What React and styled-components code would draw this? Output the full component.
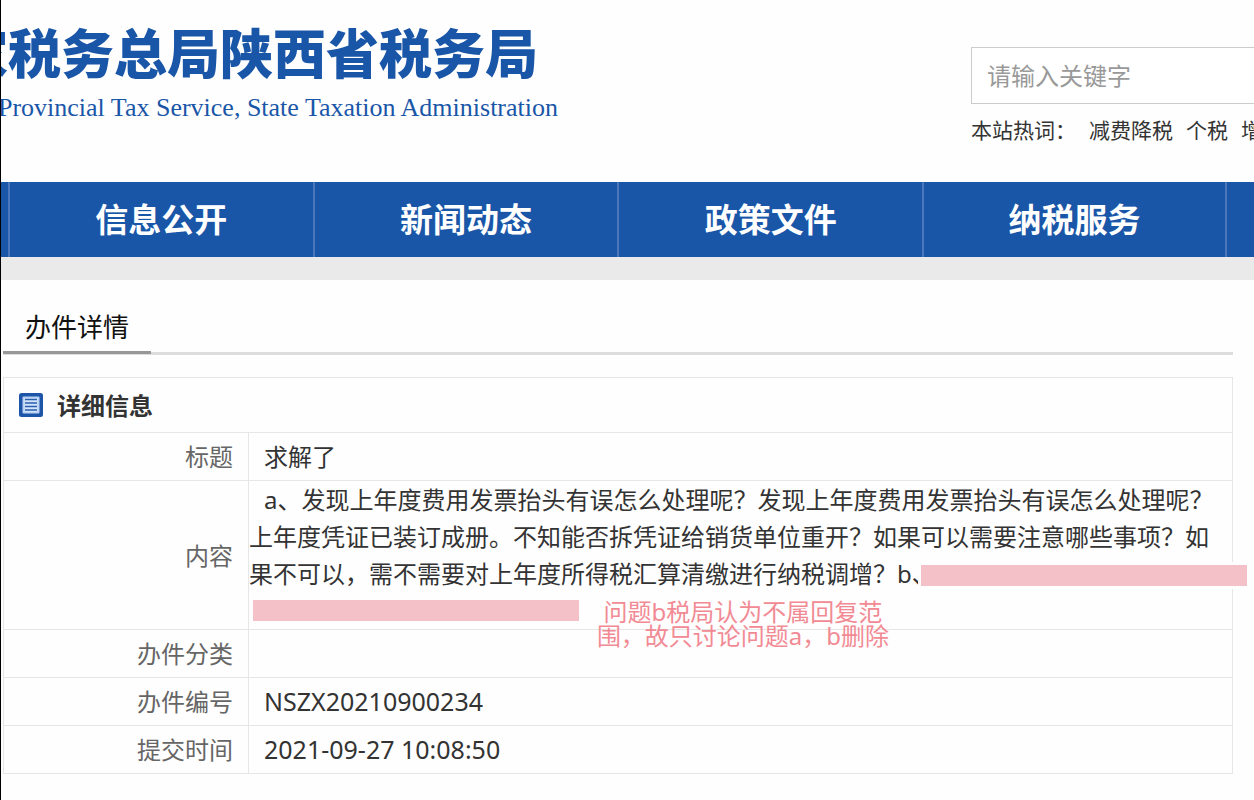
import React, {useState} from 'react';
import styled, {createGlobalStyle} from 'styled-components';

const GlobalStyle = createGlobalStyle`
  * {
    box-sizing: border-box;
  }

  body {
    margin: 0;
    background: #fefefe;
    color: #333;
    font-family: "Noto Sans", "Noto Sans CJK SC", sans-serif;
    font-size: 24px;
    overflow-x: hidden;
  }

  a {
    color: inherit;
    text-decoration: none;
  }
`;

const NAV = ['信息公开', '新闻动态', '政策文件', '纳税服务'];
const HOT_WORDS = ['减费降税', '个税', '增值税'];

const Page = styled.div`
  min-height: 100vh;
  border-left: 1px solid #000;
  overflow: hidden;
`;

const Header = styled.header`
  display: flex;
  justify-content: space-between;
  height: 182px;
`;

const Brand = styled.div`
  display: flex;
  flex-direction: column;
  align-items: flex-end;
  width: 557px;
  padding-top: 21px;
  overflow: hidden;
  color: #1a56a8;
  white-space: nowrap;
`;

const BrandName = styled.h1`
  margin: 0;
  padding-right: 20px;
  font-family: "Noto Sans CJK SC", sans-serif;
  font-size: 53px;
  font-weight: 900;
  line-height: 60px;
`;

const BrandSub = styled.p`
  margin: 12px 0 0;
  font-family: "Liberation Serif", serif;
  font-size: 26px;
  line-height: 30px;
`;

const Search = styled.form`
  width: 283px;
  padding-top: 47px;
  overflow: hidden;
  white-space: nowrap;
`;

const SearchInput = styled.input`
  display: block;
  width: 100%;
  height: 57px;
  padding: 0 15px;
  border: 1px solid #ccc;
  border-right: 0;
  border-radius: 0;
  background: #fff;
  font: inherit;
  outline: none;

  &::placeholder {
    color: #999;
  }
`;

const HotWords = styled.div`
  display: flex;
  gap: 13px;
  margin-top: 11px;
  font-size: 21px;
  line-height: 30px;
`;

const Nav = styled.nav`
  display: flex;
  height: 75px;
  padding-left: 7px;
  background: #1a56a8;
`;

const NavLink = styled.a`
  flex: 0 0 24.3vw;
  border-left: 2px solid #4a78ba;
  color: #fff;
  font-size: 33px;
  font-weight: 700;
  line-height: 76px;
  text-align: center;

  &:last-child {
    border-right: 2px solid #4a78ba;
  }
`;

const Strip = styled.div`
  height: 23px;
  background: #eaeaea;
`;

const Main = styled.main`
  margin: 0 21px 0 2px;
`;

const TabBar = styled.div`
  display: flex;
  height: 75px;
  margin-bottom: 22px;
  padding-top: 24px;
  border-bottom: 3px solid #ddd;
`;

const Tab = styled.h2`
  height: 50px;
  margin: 0;
  padding: 0 22px;
  border-bottom: 3px solid #979797;
  color: #111;
  font-size: 26px;
  font-weight: 400;
  line-height: 46px;
`;

const Details = styled.table`
  width: 100%;
  border-collapse: collapse;
  table-layout: fixed;

  th,
  td {
    padding: 0 15px;
    border: 1px solid #e6e6e6;
    line-height: 47px;
  }
`;

const Caption = styled.div`
  display: flex;
  align-items: center;
  gap: 14px;
  height: 54px;
  text-align: left;
  font-weight: 700;
`;

const Label = styled.th`
  width: 245px;
  color: #666;
  font-weight: 400;
  text-align: right;
`;

const Value = styled.td`
  height: 48px;
  font-size: ${({$code}) => ($code ? 25 : 24)}px;
`;

const Content = styled.div`
  position: relative;
  height: 148px;
  margin: 0 -15px;
  line-height: 37px;
  text-indent: 15px;
`;

const Redaction = styled.span`
  position: absolute;
  left: ${({$left}) => $left}px;
  top: ${({$top}) => $top}px;
  width: 326px;
  height: 21px;
  background: #f4c1c9;
  box-shadow: 0 0 0 3px #fefefe;
`;

const Note = styled.div`
  position: absolute;
  left: 346px;
  top: 119px;
  width: 296px;
  color: #f28a94;
  line-height: 24px;
  text-align: center;
  text-indent: 0;
`;

const ListIcon = () => (
  <svg width="24" height="24" viewBox="0 0 24 24" aria-hidden="true">
    <rect x="0" y="0" width="24" height="24" rx="2.5" fill="#1d55a8" />
    <rect x="3.5" y="3.5" width="17" height="17" rx="1" fill="#b9d2f3" />
    <rect x="5.5" y="5" width="13" height="14" fill="#d3e4fa" />
    <path d="M6 6.5h12M6 10h12M6 13.5h12M6 17h12" stroke="#2a5fae" strokeWidth="1.5" />
  </svg>
);

const Row = ({label, code, children}) => (
  <tr>
    <Label scope="row">{label}</Label>
    <Value $code={code}>{children}</Value>
  </tr>
);

const App = () => {
  const [keyword, setKeyword] = useState('');

  return (
    <Page>
      <GlobalStyle />
      <Header>
        <Brand>
          <BrandName>国家税务总局陕西省税务局</BrandName>
          <BrandSub>Shaanxi Provincial Tax Service, State Taxation Administration</BrandSub>
        </Brand>
        <Search onSubmit={event => event.preventDefault()}>
          <SearchInput
            aria-label="请输入关键字"
            placeholder="请输入关键字"
            value={keyword}
            onChange={event => setKeyword(event.target.value)}
          />
          <HotWords>
            <span>本站热词：</span>
            {HOT_WORDS.map(word => <a key={word} href="#hot">{word}</a>)}
          </HotWords>
        </Search>
      </Header>
      <Nav>
        {NAV.map(item => <NavLink key={item} href="#nav">{item}</NavLink>)}
      </Nav>
      <Strip />
      <Main>
        <TabBar>
          <Tab>办件详情</Tab>
        </TabBar>
        <Details>
          <colgroup>
            <col width="245" />
            <col />
          </colgroup>
          <thead>
            <tr>
              <th colSpan="2">
                <Caption>
                  <ListIcon />
                  详细信息
                </Caption>
              </th>
            </tr>
          </thead>
          <tbody>
            <Row label="标题">求解了</Row>
            <Row label="内容">
              <Content>
                a、发现上年度费用发票抬头有误怎么处理呢？发现上年度费用发票抬头有误怎么处理呢？上年度凭证已装订成册。不知能否拆凭证给销货单位重开？如果可以需要注意哪些事项？如果不可以，需不需要对上年度所得税汇算清缴进行纳税调增？b、
                <Redaction $left={672} $top={84} />
                <Redaction $left={4} $top={119} />
                <Note>
                  问题b税局认为不属回复范
                  <br />
                  围，故只讨论问题a，b删除
                </Note>
              </Content>
            </Row>
            <Row label="办件分类" />
            <Row label="办件编号" code>NSZX20210900234</Row>
            <Row label="提交时间" code>2021-09-27 10:08:50</Row>
          </tbody>
        </Details>
      </Main>
    </Page>
  );
};

export default App;
